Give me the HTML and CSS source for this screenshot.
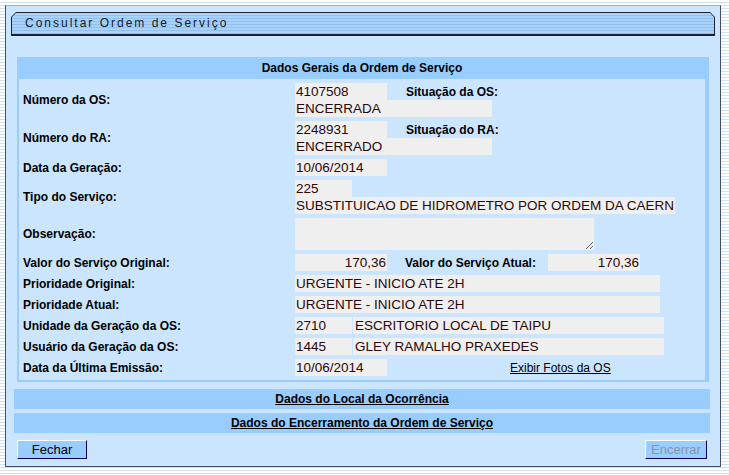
FILE: index.html
```html
<!DOCTYPE html>
<html lang="pt-BR">
<head>
    <meta charset="UTF-8">
    <title>Consultar Ordem de Serviço</title>
    <link rel="stylesheet" href="styles.css">
</head>
<body>
    <div class="panel">
        <div class="tab">
            <div class="tab-inner">Consultar Ordem de Serviço</div>
        </div>

        <div class="section">
            <div class="section-title">Dados Gerais da Ordem de Serviço</div>
            <div class="grid">
                <div class="lbl">Número da OS:</div>
                <div class="val">
                    <div class="line"><input class="fld w92" value="4107508" readonly><span class="lbl-in">Situação da OS:</span></div>
                    <div class="line"><input class="fld w197" value="ENCERRADA" readonly></div>
                </div>

                <div class="lbl">Número do RA:</div>
                <div class="val">
                    <div class="line"><input class="fld w92" value="2248931" readonly><span class="lbl-in">Situação do RA:</span></div>
                    <div class="line"><input class="fld w197" value="ENCERRADO" readonly></div>
                </div>

                <div class="lbl">Data da Geração:</div>
                <div class="val">
                    <div class="line"><input class="fld w92" value="10/06/2014" readonly></div>
                </div>

                <div class="lbl">Tipo do Serviço:</div>
                <div class="val">
                    <div class="line"><input class="fld w57" value="225" readonly></div>
                    <div class="line"><input class="fld w380" value="SUBSTITUICAO DE HIDROMETRO POR ORDEM DA CAERN" readonly></div>
                </div>

                <div class="lbl">Observação:</div>
                <div class="val">
                    <textarea class="obs" readonly></textarea>
                </div>

                <div class="lbl">Valor do Serviço Original:</div>
                <div class="val">
                    <div class="line">
                        <input class="fld w92 num" value="170,36" readonly>
                        <span class="lbl-in lbl-fixed">Valor do Serviço Atual:</span>
                        <input class="fld w92 num" value="170,36" readonly>
                    </div>
                </div>

                <div class="lbl">Prioridade Original:</div>
                <div class="val">
                    <div class="line"><input class="fld w365" value="URGENTE - INICIO ATE 2H" readonly></div>
                </div>

                <div class="lbl">Prioridade Atual:</div>
                <div class="val">
                    <div class="line"><input class="fld w365" value="URGENTE - INICIO ATE 2H" readonly></div>
                </div>

                <div class="lbl">Unidade da Geração da OS:</div>
                <div class="val">
                    <div class="line">
                        <input class="fld w57" value="2710" readonly>
                        <input class="fld w311 next" value="ESCRITORIO LOCAL DE TAIPU" readonly>
                    </div>
                </div>

                <div class="lbl">Usuário da Geração da OS:</div>
                <div class="val">
                    <div class="line">
                        <input class="fld w57" value="1445" readonly>
                        <input class="fld w311 next" value="GLEY RAMALHO PRAXEDES" readonly>
                    </div>
                </div>

                <div class="lbl">Data da Última Emissão:</div>
                <div class="val">
                    <div class="line">
                        <input class="fld w92" value="10/06/2014" readonly>
                        <a href="#" class="fotos">Exibir Fotos da OS</a>
                    </div>
                </div>
            </div>
        </div>

        <div class="band"><a href="#">Dados do Local da Ocorrência</a></div>
        <div class="band band-2"><a href="#">Dados do Encerramento da Ordem de Serviço</a></div>

        <div class="actions">
            <button class="btn btn-fechar">Fechar</button>
            <button class="btn btn-encerrar" disabled>Encerrar</button>
        </div>
    </div>
</body>
</html>
```

FILE: styles.css
```css
:root {
    --panel: #cbe5fe;
    --band: #99ccff;
    --field: #efefef;
    --ink: #000000;
}

body {
    margin: 0;
    font-family: 'Liberation Sans', Arial, sans-serif;
    background: repeating-linear-gradient(to bottom, #ffffff 0 2px, #cfe0f1 2px 3px);
    height: 475px;
    overflow: hidden;
}

.panel {
    margin: 5px 0 0 5px;
    width: 716px;
    height: 462px;
    background: var(--panel);
    border: 1px solid #3f5069;
    border-top-color: #9db2c8;
    padding-top: 6px;
    box-sizing: border-box;
}

/* aba do titulo com cantos chanfrados */
.tab {
    margin: 0 5px;
    height: 24px;
    padding: 1px 1px 2px 1px;
    box-sizing: border-box;
    background: #1c2234;
    clip-path: polygon(5px 0, calc(100% - 5px) 0, 100% 5px, 100% 100%, 0 100%, 0 5px);
}

.tab-inner {
    height: 100%;
    background: repeating-linear-gradient(to bottom, #a9d1f9 0 2px, #8fc0f1 2px 3px);
    clip-path: polygon(4px 0, calc(100% - 4px) 0, 100% 4px, 100% 100%, 0 100%, 0 4px);
    font-size: 12px;
    letter-spacing: 2px;
    color: #141c2c;
    padding-left: 13px;
    line-height: 21px;
}

.section {
    margin: 21px 11px 0 11px;
    background: var(--band);
    border-left: 2px solid var(--band);
    border-right: 4px solid var(--band);
    border-bottom: 2px solid var(--band);
}

.section-title {
    height: 22px;
    line-height: 22px;
    text-align: center;
    font-size: 12px;
    font-weight: bold;
    color: var(--ink);
}

.grid {
    background: var(--panel);
    display: grid;
    grid-template-columns: 276px 1fr;
    row-gap: 4px;
    padding: 4px 0;
}

.lbl {
    display: flex;
    align-items: center;
    padding-left: 4px;
    font-size: 12px;
    font-weight: bold;
    color: var(--ink);
}

.val {
    display: flex;
    flex-direction: column;
}

.line {
    display: flex;
    align-items: center;
    height: 17px;
}

.fld {
    box-sizing: border-box;
    height: 17px;
    border: 0;
    padding: 0 1px;
    margin: 0;
    background: var(--field);
    font-family: 'Liberation Sans', Arial, sans-serif;
    font-size: 13.5px;
    color: #2a0808;
    outline: none;
}

.num {
    text-align: right;
}

.next {
    margin-left: 1px;
    padding-left: 2px;
}

.w57 { width: 57px; }
.w92 { width: 92px; }
.w197 { width: 197px; }
.w311 { width: 311px; }
.w365 { width: 365px; }
.w380 { width: 380px; }

.lbl-in {
    margin-left: 19px;
    font-size: 12px;
    font-weight: bold;
    color: var(--ink);
}

.lbl-fixed {
    margin-left: 18px;
    width: 143px;
}

.obs {
    box-sizing: border-box;
    width: 299px;
    height: 32px;
    border: 0;
    margin: 0;
    padding: 1px;
    background: var(--field);
    display: block;
    outline: none;
}

.fotos {
    margin-left: 123px;
    font-size: 12px;
    color: var(--ink);
    text-decoration: underline;
}

.band {
    margin: 7px 10px 0 8px;
    height: 20px;
    line-height: 20px;
    background: var(--band);
    text-align: center;
    font-size: 12px;
    font-weight: bold;
}

.band a {
    color: var(--ink);
    text-decoration: underline;
}

.band-2 {
    margin-top: 4px;
}

.actions {
    display: flex;
    justify-content: space-between;
    margin: 7px 13px 0 11px;
}

.btn {
    height: 19px;
    padding: 0;
    background: var(--band);
    border: 1px solid;
    border-color: #ffffff #000066 #000066 #ffffff;
    font-family: 'Liberation Sans', Arial, sans-serif;
    font-size: 13px;
    color: var(--ink);
    cursor: pointer;
}

.btn-fechar {
    width: 70px;
}

.btn-encerrar {
    width: 62px;
    color: #8895a4;
    cursor: default;
}
```
